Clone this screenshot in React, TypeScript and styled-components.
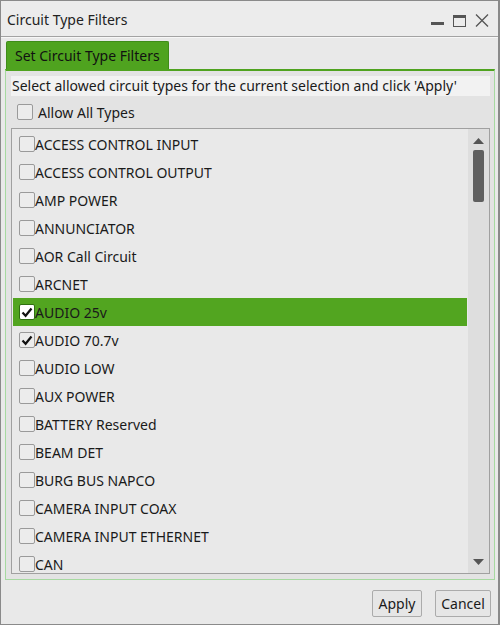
import React from "react";
import styled, { createGlobalStyle } from "styled-components";

const Global = createGlobalStyle`
  html, body { margin: 0; padding: 0; background: #e9e9e9; }
  body { font-family: "Noto Sans", "Open Sans", sans-serif; color: #1a1a1a; }
  * { box-sizing: border-box; }
`;

const Window = styled.div`
  width: 500px;
  height: 625px;
  border: 1px solid #8a8a8a;
  border-right-width: 2px;
  background: #e9e9e9;
  display: flex;
  flex-direction: column;
  overflow: hidden;
`;

const TitleBar = styled.div`
  height: 36px;
  flex: none;
  display: flex;
  align-items: center;
  padding: 0 9px 0 6px;
  background: #ececec;
  border-bottom: 1px solid #a3a3a3;
  box-shadow: 0 1px 0 #f7f7f7;
`;

const Title = styled.div`
  flex: 1;
  font-size: 14px;
  color: #222;
  padding-top: 2px;
`;

const Controls = styled.div`
  display: flex;
  align-items: center;
  gap: 9px;
  padding-top: 4px;
`;

const Body = styled.div`
  flex: 1;
  display: flex;
  flex-direction: column;
  padding: 4px 3px 0 4px;
`;

const TabStrip = styled.div`
  display: flex;
  height: 28px;
  align-items: flex-end;
`;

const Tab = styled.div`
  height: 28px;
  padding: 0 8px;
  display: flex;
  align-items: center;
  font-size: 14px;
  color: #111;
  background: #4fa31f;
  border: 1px solid #3f8c19;
  border-bottom: none;
  border-radius: 2px 2px 0 0;
  margin-left: 1px;
`;

const Panel = styled.div`
  height: 511px;
  border-top: 2px solid #4fa31f;
  border-left: 1px solid #a6d9a0;
  border-right: 1px solid #a6d9a0;
  border-bottom: 1px solid #a6d9a0;
  background: #e3e3e3;
  padding: 5px 4px 0 5px;
  display: flex;
  flex-direction: column;
`;

const Hint = styled.div`
  height: 20px;
  background: #f2f2f2;
  font-size: 14px;
  line-height: 20px;
  padding-left: 1px;
  white-space: nowrap;
  overflow: hidden;
`;

const AllRow = styled.label`
  height: 32px;
  display: flex;
  align-items: center;
  gap: 5px;
  padding-left: 6px;
  font-size: 14px;
`;

const ListBox = styled.div`
  height: 446px;
  border: 1px solid #a0a0a0;
  background: #e9e9e9;
  display: flex;
  overflow: hidden;
`;

const Rows = styled.div`
  flex: 1;
  padding: 1px 1px 0 1px;
  overflow: hidden;
`;

const Row = styled.div<{ $selected?: boolean }>`
  height: 28px;
  display: flex;
  align-items: center;
  padding-left: 6px;
  font-size: 14px;
  background: ${(p) => (p.$selected ? "#52a520" : "transparent")};
  color: #1a1a1a;
  white-space: nowrap;
`;

const Box = styled.span<{ $checked?: boolean; $onGreen?: boolean }>`
  width: 16px;
  height: 16px;
  flex: none;
  border: 1px solid ${(p) => (p.$onGreen ? "#2f6f10" : "#9a9a9a")};
  border-radius: 2px;
  background: ${(p) => (p.$onGreen ? "#ffffff" : "#ececec")};
  display: flex;
  align-items: center;
  justify-content: center;
`;

const Scroll = styled.div`
  width: 21px;
  flex: none;
  background: #dedede;
  display: flex;
  flex-direction: column;
  align-items: center;
  padding-top: 9px;
`;

const Thumb = styled.div`
  width: 11px;
  height: 52px;
  background: #5f5f5f;
  border-radius: 2px;
  margin-top: 6px;
`;

const Spacer = styled.div`
  flex: 1;
`;

const Footer = styled.div`
  flex: 1;
  display: flex;
  justify-content: flex-end;
  align-items: flex-start;
  gap: 13px;
  padding-right: 4px;
  padding-top: 10px;
`;

const Button = styled.button<{ $w: number }>`
  width: ${(p) => p.$w}px;
  height: 27px;
  font-family: inherit;
  font-size: 14px;
  color: #1a1a1a;
  background: #e6e6e6;
  border: 1px solid #ababab;
  border-radius: 2px;
  padding: 0;
`;

const Check = () => (
  <svg width="12" height="11" viewBox="0 0 12 11">
    <path d="M1.5 5.5 L4.6 8.8 L10.5 1.5" fill="none" stroke="#111" strokeWidth="2.2" />
  </svg>
);

const items = [
  "ACCESS CONTROL INPUT",
  "ACCESS CONTROL OUTPUT",
  "AMP POWER",
  "ANNUNCIATOR",
  "AOR Call Circuit",
  "ARCNET",
  "AUDIO 25v",
  "AUDIO 70.7v",
  "AUDIO LOW",
  "AUX POWER",
  "BATTERY Reserved",
  "BEAM DET",
  "BURG BUS NAPCO",
  "CAMERA INPUT COAX",
  "CAMERA INPUT ETHERNET",
  "CAN",
];

const checked = new Set(["AUDIO 25v", "AUDIO 70.7v"]);

export default function App() {
  return (
    <>
      <Global />
      <Window>
        <TitleBar>
          <Title>Circuit Type Filters</Title>
          <Controls>
            <svg width="13" height="12" viewBox="0 0 13 12">
              <rect x="0" y="7" width="13" height="3" fill="#555" />
            </svg>
            <svg width="13" height="12" viewBox="0 0 13 12">
              <rect x="0.5" y="0.5" width="12" height="11" fill="none" stroke="#555" />
              <rect x="0" y="0" width="13" height="3" fill="#555" />
            </svg>
            <svg width="14" height="13" viewBox="0 0 14 13">
              <path d="M1 0.5 L13 12.5 M13 0.5 L1 12.5" stroke="#555" strokeWidth="1.3" />
            </svg>
          </Controls>
        </TitleBar>
        <Body>
          <TabStrip>
            <Tab>Set Circuit Type Filters</Tab>
          </TabStrip>
          <Panel>
            <Hint>Select allowed circuit types for the current selection and click 'Apply'</Hint>
            <AllRow>
              <Box />
              Allow All Types
            </AllRow>
            <ListBox>
              <Rows>
                {items.map((it) => {
                  const sel = it === "AUDIO 25v";
                  const c = checked.has(it);
                  return (
                    <Row key={it} $selected={sel}>
                      <Box $checked={c} $onGreen={sel}>{c && <Check />}</Box>
                      {it}
                    </Row>
                  );
                })}
              </Rows>
              <Scroll>
                <svg width="11" height="6" viewBox="0 0 11 6">
                  <path d="M0 6 L5.5 0 L11 6 Z" fill="#555" />
                </svg>
                <Thumb />
                <Spacer />
                <svg width="11" height="6" viewBox="0 0 11 6" style={{ marginBottom: 8 }}>
                  <path d="M0 0 L5.5 6 L11 0 Z" fill="#555" />
                </svg>
              </Scroll>
            </ListBox>
          </Panel>
          <Footer>
            <Button $w={50}>Apply</Button>
            <Button $w={56}>Cancel</Button>
          </Footer>
        </Body>
      </Window>
    </>
  );
}
